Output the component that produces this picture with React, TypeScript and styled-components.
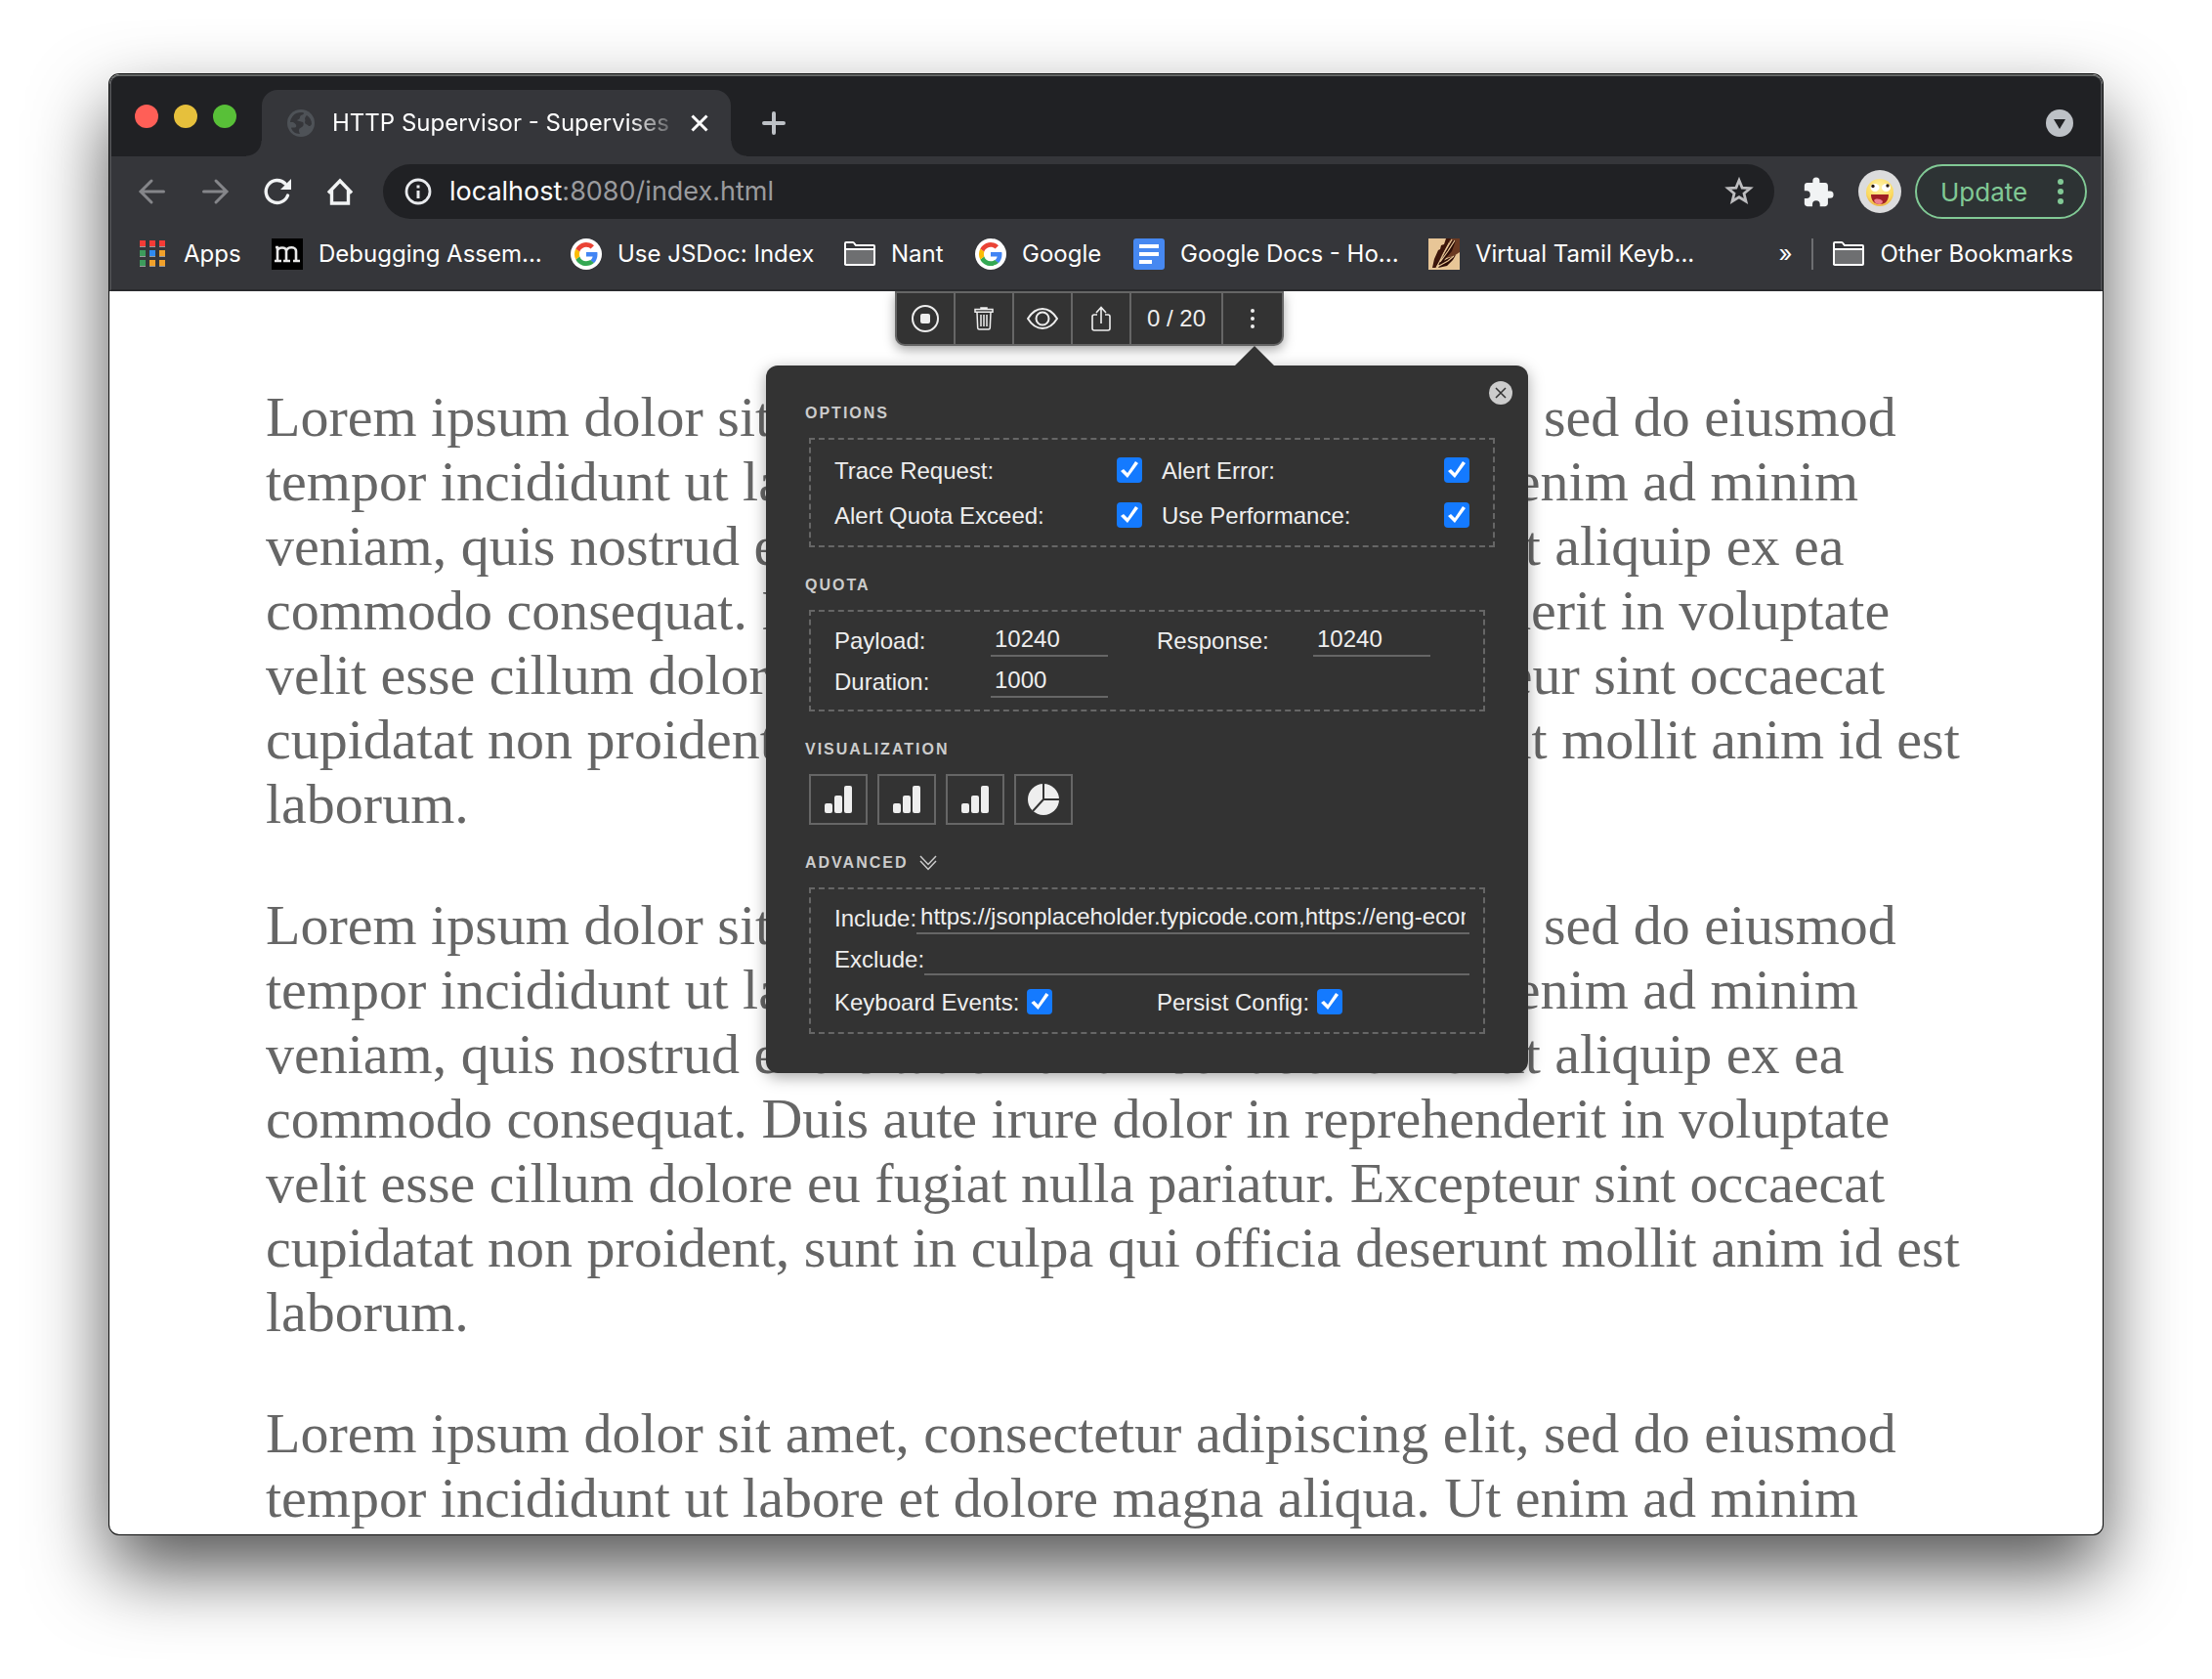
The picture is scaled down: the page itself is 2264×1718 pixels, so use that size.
import React, { useId } from "react";
import styled, { createGlobalStyle } from "styled-components";

const ui = `Inter, "Liberation Sans", sans-serif`;
const sans = `"Liberation Sans", Arial, sans-serif`;
const serif = `"Liberation Serif", "Times New Roman", serif`;

const GlobalStyle = createGlobalStyle`
  *, *::before, *::after { box-sizing: border-box; }
  html, body { margin: 0; background: #fff; }
  button, input { font: inherit; color: inherit; }
  button { padding: 0; border: 0; background: none; cursor: pointer; }
  svg { display: block; flex: none; }
`;

/* ---------- window ---------- */

const Desktop = styled.div`
  height: 100vh;
  padding: 76px 112px 148px;
  display: flex;
  overflow: hidden;
`;

const Window = styled.main`
  flex: 1;
  min-width: 0;
  display: flex;
  flex-direction: column;
  overflow: hidden;
  border-radius: 10px;
  background: #fff;
  box-shadow: 0 0 0 1px #0c0d0d, 0 36px 78px rgba(0, 0, 0, 0.68);
`;

const Chrome = styled.header`
  flex: none;
  display: flex;
  flex-direction: column;
  border: 2px solid #4c4d50;
  border-top-color: #646766;
  border-bottom-color: #292a2d;
  border-radius: 10px 10px 0 0;
  background: #35363a;
  color: #fff;
  font-family: ${ui};
`;

const TabStrip = styled.div`
  height: 82px;
  padding: 14px 28px 0 24px;
  display: flex;
  border-radius: 8px 8px 0 0;
  background: #202124;
`;

const Lights = styled.div`
  height: 54px;
  display: flex;
  align-items: center;
  gap: 16px;
  margin-right: 26px;
`;

const Light = styled.button<{ $color: string }>`
  width: 24px;
  height: 24px;
  border-radius: 50%;
  background: ${(p) => p.$color};
`;

const Tab = styled.div`
  position: relative;
  width: 480px;
  height: 68px;
  padding: 0 20px 0 26px;
  display: flex;
  align-items: center;
  border-radius: 16px 16px 0 0;
  background: #35363a;
  &::before,
  &::after {
    content: "";
    position: absolute;
    bottom: 0;
    width: 16px;
    height: 16px;
  }
  &::before {
    right: 100%;
    background: radial-gradient(circle at 0 0, #202124 15px, #35363a 16px);
  }
  &::after {
    left: 100%;
    background: radial-gradient(circle at 100% 0, #202124 15px, #35363a 16px);
  }
`;

const TabTitle = styled.span`
  flex: 1;
  margin: 0 12px 0 18px;
  overflow: hidden;
  white-space: nowrap;
  font-size: 24px;
  line-height: 32px;
  mask-image: linear-gradient(90deg, #000 86%, transparent 102%);
`;

const IconButton = styled.button<{ $size?: number }>`
  flex: none;
  width: ${(p) => p.$size ?? 24}px;
  height: ${(p) => p.$size ?? 24}px;
  display: grid;
  place-items: center;
`;

const StripActions = styled.div`
  flex: 1;
  height: 68px;
  padding-left: 30px;
  display: flex;
  align-items: center;
  justify-content: space-between;
`;

/* ---------- navigation ---------- */

const NavBar = styled.div`
  height: 72px;
  padding: 0 14px 0 26px;
  display: flex;
  align-items: center;
`;

const NavButtons = styled.div`
  display: flex;
  gap: 32px;
  margin-right: 28px;
`;

const AddressBar = styled.div`
  flex: 1;
  height: 56px;
  padding: 0 20px;
  display: flex;
  align-items: center;
  border-radius: 28px;
  background: #202124;
`;

const Address = styled.a`
  flex: 1;
  margin-left: 16px;
  color: #9a9b9e;
  font-size: 27px;
  line-height: 36px;
  text-decoration: none;
`;

const Host = styled.span`
  color: #fff;
`;

const ExtensionButtons = styled.div`
  display: flex;
  align-items: center;
  gap: 26px;
  margin: 0 14px 0 28px;
`;

const UpdateButton = styled.button`
  width: 176px;
  height: 56px;
  padding: 0 22px 0 24px;
  display: flex;
  align-items: center;
  justify-content: space-between;
  border: 2px solid #81c995;
  border-radius: 28px;
  background: #2d3334;
  color: #81c995;
  font-size: 26px;
`;

/* ---------- bookmarks ---------- */

const BookmarkBar = styled.nav`
  height: 64px;
  padding: 0 28px 8px;
  display: flex;
  align-items: center;
  font-size: 24px;
  line-height: 32px;
`;

const Bookmark = styled.a<{ $width?: number }>`
  flex: none;
  width: ${(p) => (p.$width ? `${p.$width}px` : "auto")};
  display: flex;
  align-items: center;
  gap: 16px;
  color: #fff;
  white-space: nowrap;
  text-decoration: none;
`;

const Overflow = styled.button`
  margin-left: auto;
  font-size: 24px;
  line-height: 32px;
`;

const Divider = styled.span`
  width: 2px;
  height: 32px;
  margin: 0 20px;
  background: #6d6e71;
`;

/* ---------- page ---------- */

const Viewport = styled.section`
  position: relative;
  flex: 1;
  min-height: 0;
  overflow: hidden;
`;

const Article = styled.article`
  padding: 38px 140px 0 160px;
  color: #666;
  font-family: ${serif};
  font-size: 58px;
  line-height: 66px;
`;

const Paragraph = styled.p`
  margin: 58px 0;
`;

const Toolbar = styled.div`
  position: absolute;
  top: 0;
  left: 804px;
  height: 56px;
  display: flex;
  gap: 2px;
  padding: 2px;
  border-radius: 0 0 10px 10px;
  background: #666;
  box-shadow: 0 4px 12px rgba(0, 0, 0, 0.35);
  color: #eee;
  font-family: ${sans};
  font-size: 24px;
`;

const Tool = styled.button<{ $width?: number }>`
  width: ${(p) => p.$width ?? 58}px;
  display: grid;
  place-items: center;
  background: #333;
  &:first-child {
    border-bottom-left-radius: 8px;
  }
  &:last-child {
    border-bottom-right-radius: 8px;
  }
`;

const Count = styled(Tool).attrs({ as: "output" })``;

const Popover = styled.form`
  position: absolute;
  top: 76px;
  left: 672px;
  width: 780px;
  padding: 38px 40px 40px;
  display: flex;
  flex-direction: column;
  gap: 28px;
  border-radius: 12px;
  background: #333;
  box-shadow: 0 4px 16px rgba(0, 0, 0, 0.35);
  color: #eee;
  font-family: ${sans};
  font-size: 24px;
  line-height: 28px;
  &::before {
    content: "";
    position: absolute;
    top: -20px;
    left: 480px;
    border: 20px solid transparent;
    border-top: 0;
    border-bottom-color: #333;
  }
`;

const CloseButton = styled.button`
  position: absolute;
  top: 16px;
  right: 16px;
  width: 24px;
  height: 24px;
  display: grid;
  place-items: center;
  border-radius: 50%;
  background: #ccc;
`;

const Section = styled.section`
  display: flex;
  flex-direction: column;
  gap: 14px;
`;

const Heading = styled.h2`
  margin: 0;
  display: flex;
  align-items: center;
  gap: 12px;
  color: #ccc;
  font-size: 16px;
  line-height: 22px;
  letter-spacing: 2px;
  text-transform: uppercase;
`;

const OptionBox = styled.div`
  margin: 0 -6px 0 4px;
  padding: 18px 24px;
  display: grid;
  grid-template-columns: 1fr 1fr;
  gap: 20px;
  border: 2px dashed #666;
`;

const FieldBox = styled.div<{ $bottom: number }>`
  margin: 0 4px;
  padding: 12px 14px ${(p) => p.$bottom}px 24px;
  display: grid;
  grid-template-columns: 1fr 1fr;
  gap: 8px 10px;
  border: 2px dashed #666;
`;

const CheckRow = styled.div<{ $packed?: boolean }>`
  height: 26px;
  margin-top: ${(p) => (p.$packed ? 6 : 0)}px;
  display: flex;
  align-items: center;
  justify-content: ${(p) => (p.$packed ? "flex-start" : "space-between")};
  gap: 8px;
`;

const FieldRow = styled.div<{ $full?: boolean }>`
  height: 34px;
  display: flex;
  align-items: center;
  grid-column: ${(p) => (p.$full ? "1 / -1" : "auto")};
`;

const Label = styled.label<{ $width?: number }>`
  flex: none;
  width: ${(p) => (p.$width ? `${p.$width}px` : "auto")};
  padding-top: 2px;
`;

const TextInput = styled.input<{ $width?: number }>`
  flex: ${(p) => (p.$width ? "none" : "1")};
  width: ${(p) => (p.$width ? `${p.$width}px` : "auto")};
  min-width: 0;
  height: 34px;
  padding: 0 4px;
  border: 0;
  border-bottom: 2px solid #666;
  border-radius: 0;
  outline: 0;
  background: transparent;
`;

const Checkbox = styled.input`
  appearance: none;
  flex: none;
  width: 26px;
  height: 26px;
  margin: 0;
  border-radius: 4px;
  background: #eee;
  &:checked {
    background: #147aff;
  }
  &:checked::after {
    content: "";
    display: block;
    width: 26px;
    height: 26px;
    background: #fff;
    clip-path: polygon(4px 14px, 7px 12px, 11px 16px, 19px 4px, 22px 6px, 11px 21px);
  }
`;

const ChartButtons = styled.div`
  margin: 0 4px;
  display: flex;
  gap: 10px;
`;

const ChartButton = styled.button`
  width: 60px;
  height: 52px;
  display: grid;
  place-items: center;
  border: 2px solid #666;
`;

/* ---------- icons ---------- */

const GlobeIcon = () => (
  <svg width="28" height="28" viewBox="0 0 28 28">
    <circle cx="14" cy="14" r="14" fill="#4e5257" />
    <path
      fill="#35363a"
      d="M3 13C4 7 8 3 14 3c2 0 3 0 3 1 0 2-4 1-4 4 0 2-2 2-3 3 0 1 4 1 6 2 1 1 1 4-1 5-1 1-3 1-3 3 0 1 0 2 1 4-5 0-8-3-9-6 0-1 4 0 5-1 1-2-1-4-3-5zM20 6c3 2 5 5 5 9-1 2-3 3-4 1-1-1-3-1-3-3 0-1 1-2 0-3 0-2 1-3 2-4z"
    />
  </svg>
);

const ArrowIcon = ({ right }: { right?: boolean }) => (
  <svg width="32" height="32" viewBox="0 0 32 32" fill="none" stroke="#85868a" strokeWidth="3" strokeLinecap="round">
    {right ? <path d="M4.500 16H27M17 5l11 11-11 11" /> : <path d="M27.500 16H5M15 5L4 16l11 11" />}
  </svg>
);

const ReloadIcon = () => (
  <svg width="32" height="32" viewBox="0 0 32 32">
    <path d="M26.500 20A11.500 11.500 0 1 1 24 8" fill="none" stroke="#f1f3f4" strokeWidth="3.400" strokeLinecap="round" />
    <path d="M30 3v11H19z" fill="#f1f3f4" />
  </svg>
);

const HomeIcon = () => (
  <svg width="32" height="32" viewBox="0 0 32 32" fill="none" stroke="#f1f3f4" strokeWidth="3.400">
    <path d="M4 17.500L16 5l12 12.500M7.500 15v13h17V15" strokeLinejoin="miter" />
  </svg>
);

const InfoIcon = () => (
  <svg width="32" height="32" viewBox="0 0 32 32">
    <circle cx="16" cy="16" r="12" fill="none" stroke="#e8eaed" strokeWidth="2.800" />
    <path d="M14.500 9.500h3v3h-3zM14.500 15h3v8h-3z" fill="#e8eaed" />
  </svg>
);

const StarIcon = () => (
  <svg width="32" height="32" viewBox="0 0 32 32">
    <path
      d="M16 4.500l3.100 7.600 8.200.6-6.300 5.300 2 8-7-4.300L9 26l2-8-6.300-5.300 8.200-.6z"
      fill="none"
      stroke="#bdbdbf"
      strokeWidth="2.800"
    />
  </svg>
);

const PuzzleIcon = () => (
  <svg width="34" height="34" viewBox="0 0 24 24" fill="#f1f3f4">
    <path d="M20.500 11H19V7c0-1.100-.9-2-2-2h-4V3.500a2.500 2.500 0 0 0-5 0V5H4c-1.100 0-2 .9-2 2v3.800h1.500a2.700 2.700 0 0 1 0 5.400H2V20c0 1.100.9 2 2 2h3.800v-1.500a2.700 2.700 0 0 1 5.400 0V22H17c1.100 0 2-.9 2-2v-4h1.500a2.500 2.500 0 0 0 0-5z" />
  </svg>
);

const AvatarIcon = () => (
  <svg width="44" height="44" viewBox="0 0 44 44">
    <defs>
      <radialGradient id="face" cx=".5" cy=".3" r=".75">
        <stop offset="0" stopColor="#fff3a8" />
        <stop offset=".7" stopColor="#fbd95e" />
        <stop offset="1" stopColor="#e8a33d" />
      </radialGradient>
    </defs>
    <circle cx="22" cy="22" r="22" fill="#dcdcdd" />
    <circle cx="22" cy="23" r="14" fill="url(#face)" />
    <ellipse cx="17" cy="18" rx="4.500" ry="4" fill="#fff" />
    <ellipse cx="28.500" cy="18" rx="4.500" ry="4" fill="#fff" />
    <circle cx="15" cy="16.500" r="1.700" fill="#2b1d12" />
    <circle cx="30" cy="16" r="1.700" fill="#2b1d12" />
    <path d="M13 25h18c0 6-3 10-9 10s-9-4-9-10z" fill="#a11f24" />
    <path d="M16 31c2-2 6-2 9 1 0 2-2 3-3 3-3 0-5-1-6-4z" fill="#ee7f8e" />
  </svg>
);

const DotsIcon = ({ r, gap, color }: { r: number; gap: number; color: string }) => (
  <svg width={r * 2} height={gap * 2 + r * 2} fill={color}>
    {[0, 1, 2].map((i) => (
      <circle key={i} cx={r} cy={r + gap * i} r={r} />
    ))}
  </svg>
);

const appColors = ["#f53b36", "#f53b36", "#f53b36", "#3d9b5c", "#2f8bf2", "#f1a12b", "#3d9b5c", "#f1a12b", "#f1a12b"];

const AppsIcon = () => (
  <svg width="30" height="32" viewBox="0 0 30 32">
    {appColors.map((c, i) => (
      <g key={i}>
        <rect x={1 + (i % 3) * 10} y={2 + Math.floor(i / 3) * 10} width="6" height="7" fill="#9a9a9c" />
        <rect x={1 + (i % 3) * 10} y={2 + Math.floor(i / 3) * 10} width="6" height="6" fill={c} />
      </g>
    ))}
  </svg>
);

const MIcon = () => (
  <svg width="32" height="32" viewBox="0 0 32 32">
    <path fill="#000" d="M0 0h32v32H0z" />
    <path d="M4 9h3M6 24V9M3 23h7M12 23h7M22 23h7M6 12c1-3 9-4 9 1v11M15 13c1-5 10-5 10 0v11" fill="none" stroke="#e8e8e8" strokeWidth="2.600" />
  </svg>
);

const GoogleIcon = () => (
  <svg width="32" height="32" viewBox="0 0 32 32">
    <circle cx="16" cy="16" r="16" fill="#fff" />
    <g transform="translate(4 4)">
      <path fill="#4285f4" d="M23.500 12.300c0-.9-.1-1.500-.2-2.200H12v4.400h6.600c-.2 1.100-.9 2.700-2.500 3.800l3.800 3c2.300-2.200 3.600-5.300 3.600-9z" />
      <path fill="#34a853" d="M12 24c3.200 0 6-1.100 7.900-2.900l-3.800-3c-1 .7-2.400 1.200-4.100 1.200-3.100 0-5.800-2.100-6.700-4.900l-4 3C3.200 21.400 7.300 24 12 24z" />
      <path fill="#fbbc05" d="M5.300 14.400a7.400 7.400 0 0 1 0-4.800l-4-3.100a12 12 0 0 0 0 10.900z" />
      <path fill="#ea4335" d="M12 4.700c2.300 0 3.800 1 4.600 1.800L20 3.200A12 12 0 0 0 1.300 6.500l4 3.100c.9-2.800 3.600-4.900 6.700-4.900z" />
    </g>
  </svg>
);

const FolderIcon = () => (
  <svg width="32" height="32" viewBox="0 0 32 32">
    <path d="M1 11h30v16H1z" fill="#6e6f71" />
    <path d="M1 27V5q0-1 1-1h7q1 0 2 2l1 1h18q1 0 1 1v18q0 1-1 1H2q-1 0-1-1M1 11h30" fill="none" stroke="#fff" strokeWidth="2" />
  </svg>
);

const DocsIcon = () => (
  <svg width="32" height="32" viewBox="0 0 32 32">
    <rect width="32" height="32" rx="3" fill="#4688f1" />
    <path d="M6 6h20v4H6zM6 14h20v4H6zM6 22h13v4H6z" fill="#fff" />
  </svg>
);

const TamilIcon = () => (
  <svg width="32" height="32" viewBox="0 0 32 32">
    <path fill="#e8c697" d="M0 0h32v32H0z" />
    <path fill="#6b3a22" d="M22 0h10v14l-6 4-8 2z" />
    <path fill="#3d160b" d="M18 0h5L14 17l-6 13H4l2-9 4-9 2-1 1-4 3-1z" />
    <path fill="#2c0d07" d="M25 2h3l-4 11-12 14h-4l9-14zM28 17l-3 5-6 6-9 2 5-7 6-3z" />
    <path d="M8 30l8-15L24 1M12 24l8-11 7-11M11 28l9-5 6-5" fill="none" stroke="#e8c697" strokeWidth="1.200" />
  </svg>
);

const ChartIcon = () => (
  <svg width="28" height="28" viewBox="0 0 28 28" fill="#eee">
    <rect x="0" y="18" width="8" height="10" rx="2" />
    <rect x="10" y="10" width="8" height="18" rx="2" />
    <rect x="20" y="0" width="8" height="28" rx="2" />
  </svg>
);

const PieIcon = () => (
  <svg width="32" height="32" viewBox="0 0 32 32">
    <circle cx="16" cy="16" r="16" fill="#eee" />
    <path d="M16 0v16h16M16 16L5 28" fill="none" stroke="#333" strokeWidth="2" />
  </svg>
);

/* ---------- content ---------- */

const bookmarks = [
  { label: "Apps", width: 136, icon: <AppsIcon /> },
  { label: "Debugging Assem...", width: 306, icon: <MIcon /> },
  { label: "Use JSDoc: Index", width: 280, icon: <GoogleIcon /> },
  { label: "Nant", width: 134, icon: <FolderIcon /> },
  { label: "Google", width: 162, icon: <GoogleIcon /> },
  { label: "Google Docs - Ho...", width: 302, icon: <DocsIcon /> },
  { label: "Virtual Tamil Keyb...", icon: <TamilIcon /> },
];

const lorem =
  "Lorem ipsum dolor sit amet, consectetur adipiscing elit, sed do eiusmod tempor incididunt ut labore et dolore magna aliqua. Ut enim ad minim veniam, quis nostrud exercitation ullamco laboris nisi ut aliquip ex ea commodo consequat. Duis aute irure dolor in reprehenderit in voluptate velit esse cillum dolore eu fugiat nulla pariatur. Excepteur sint occaecat cupidatat non proident, sunt in culpa qui officia deserunt mollit anim id est laborum.";

const Check = ({ label, packed }: { label: string; packed?: boolean }) => {
  const id = useId();
  return (
    <CheckRow $packed={packed}>
      <Label htmlFor={id}>{label}</Label>
      <Checkbox id={id} type="checkbox" defaultChecked />
    </CheckRow>
  );
};

const Quota = ({ label, value }: { label: string; value: string }) => {
  const id = useId();
  return (
    <FieldRow>
      <Label htmlFor={id} $width={160}>{label}</Label>
      <TextInput id={id} type="text" defaultValue={value} $width={120} />
    </FieldRow>
  );
};

const UrlField = ({ label, value }: { label: string; value: string }) => {
  const id = useId();
  return (
    <FieldRow $full>
      <Label htmlFor={id}>{label}</Label>
      <TextInput id={id} type="text" defaultValue={value} />
    </FieldRow>
  );
};

export default function App() {
  return (
    <Desktop>
      <GlobalStyle />
      <Window>
        <Chrome>
          <TabStrip>
            <Lights>
              <Light $color="#ff5f57" aria-label="Close window" />
              <Light $color="#e6c03c" aria-label="Minimise window" />
              <Light $color="#58c038" aria-label="Zoom window" />
            </Lights>
            <Tab>
              <GlobeIcon />
              <TabTitle>HTTP Supervisor - Supervises</TabTitle>
              <IconButton aria-label="Close tab">
                <svg width="18" height="18" stroke="#fff" strokeWidth="3"><path d="M1.500 1.500l15 15M16.500 1.500l-15 15" /></svg>
              </IconButton>
            </Tab>
            <StripActions>
              <IconButton $size={28} aria-label="New tab">
                <svg width="24" height="24" stroke="#bdc1c6" strokeWidth="4" strokeLinecap="round"><path d="M12 2v20M2 12h20" /></svg>
              </IconButton>
              <IconButton $size={28} aria-label="Search tabs">
                <svg width="28" height="28"><circle cx="14" cy="14" r="14" fill="#bdc1c6" /><path d="M8 10h12l-6 10z" fill="#202124" /></svg>
              </IconButton>
            </StripActions>
          </TabStrip>
          <NavBar>
            <NavButtons>
              <IconButton $size={32} aria-label="Back"><ArrowIcon /></IconButton>
              <IconButton $size={32} aria-label="Forward"><ArrowIcon right /></IconButton>
              <IconButton $size={32} aria-label="Reload"><ReloadIcon /></IconButton>
              <IconButton $size={32} aria-label="Home"><HomeIcon /></IconButton>
            </NavButtons>
            <AddressBar>
              <IconButton $size={32} aria-label="Site information"><InfoIcon /></IconButton>
              <Address href="#"><Host>localhost</Host>:8080/index.html</Address>
              <IconButton $size={32} aria-label="Bookmark this page"><StarIcon /></IconButton>
            </AddressBar>
            <ExtensionButtons>
              <IconButton $size={32} aria-label="Extensions"><PuzzleIcon /></IconButton>
              <IconButton $size={44} aria-label="Profile"><AvatarIcon /></IconButton>
            </ExtensionButtons>
            <UpdateButton>
              Update
              <DotsIcon r={3} gap={10} color="#81c995" />
            </UpdateButton>
          </NavBar>
          <BookmarkBar>
            {bookmarks.map((b) => (
              <Bookmark key={b.label} href="#" $width={b.width}>
                {b.icon}
                {b.label}
              </Bookmark>
            ))}
            <Overflow aria-label="More bookmarks">»</Overflow>
            <Divider />
            <Bookmark href="#">
              <FolderIcon />
              Other Bookmarks
            </Bookmark>
          </BookmarkBar>
        </Chrome>
        <Viewport>
          <Article>
            <Paragraph>{lorem}</Paragraph>
            <Paragraph>{lorem}</Paragraph>
            <Paragraph>{lorem}</Paragraph>
          </Article>
          <Toolbar>
            <Tool aria-label="Stop">
              <svg width="28" height="28"><circle cx="14" cy="14" r="13" fill="none" stroke="#eee" strokeWidth="2" /><rect x="9" y="9" width="10" height="10" rx="2" fill="#eee" /></svg>
            </Tool>
            <Tool aria-label="Clear">
              <svg width="20" height="24" fill="none" stroke="#eee" strokeWidth="1.500">
                <path d="M7 2.500V1h6v1.500M1 2.500h18v2.800H1zM3 5.500l.7 16q.1 1.500 1.500 1.500h9.600q1.400 0 1.500-1.500l.7-16M7 8v12M10 8v12M13 8v12" />
              </svg>
            </Tool>
            <Tool aria-label="View">
              <svg width="32" height="24" fill="none" stroke="#eee" strokeWidth="2">
                <path d="M1 12C6 4 11 2 16 2s10 2 15 10c-5 8-10 10-15 10S6 20 1 12z" /><circle cx="16" cy="12" r="6.500" />
              </svg>
            </Tool>
            <Tool aria-label="Export">
              <svg width="20" height="26" fill="none" stroke="#eee" strokeWidth="1.600">
                <path d="M6 9H3Q1 9 1 11v12q0 2 2 2h14q2 0 2-2V11q0-2-2-2h-3M10 18V2M5 7l5-5.500L15 7" />
              </svg>
            </Tool>
            <Count $width={92}>0 / 20</Count>
            <Tool $width={60} aria-label="Options">
              <DotsIcon r={2} gap={8} color="#eee" />
            </Tool>
          </Toolbar>
          <Popover>
            <CloseButton type="button" aria-label="Close">
              <svg width="12" height="12" stroke="#333" strokeWidth="1.500"><path d="M1 1l10 10M11 1L1 11" /></svg>
            </CloseButton>
            <Section>
              <Heading>Options</Heading>
              <OptionBox>
                <Check label="Trace Request:" />
                <Check label="Alert Error:" />
                <Check label="Alert Quota Exceed:" />
                <Check label="Use Performance:" />
              </OptionBox>
            </Section>
            <Section>
              <Heading>Quota</Heading>
              <FieldBox $bottom={12}>
                <Quota label="Payload:" value="10240" />
                <Quota label="Response:" value="10240" />
                <Quota label="Duration:" value="1000" />
              </FieldBox>
            </Section>
            <Section>
              <Heading>Visualization</Heading>
              <ChartButtons>
                <ChartButton type="button" aria-label="Payload chart"><ChartIcon /></ChartButton>
                <ChartButton type="button" aria-label="Response chart"><ChartIcon /></ChartButton>
                <ChartButton type="button" aria-label="Duration chart"><ChartIcon /></ChartButton>
                <ChartButton type="button" aria-label="Share of requests"><PieIcon /></ChartButton>
              </ChartButtons>
            </Section>
            <Section>
              <Heading>
                Advanced
                <svg width="18" height="16" fill="none" stroke="#ccc" strokeWidth="1.500"><path d="M1 1l8 8.500L17 1M1 6l8 8.500L17 6" /></svg>
              </Heading>
              <FieldBox $bottom={18}>
                <UrlField label="Include:" value="https://jsonplaceholder.typicode.com,https://eng-econ" />
                <UrlField label="Exclude:" value="" />
                <Check label="Keyboard Events:" packed />
                <Check label="Persist Config:" packed />
              </FieldBox>
            </Section>
          </Popover>
        </Viewport>
      </Window>
    </Desktop>
  );
}
